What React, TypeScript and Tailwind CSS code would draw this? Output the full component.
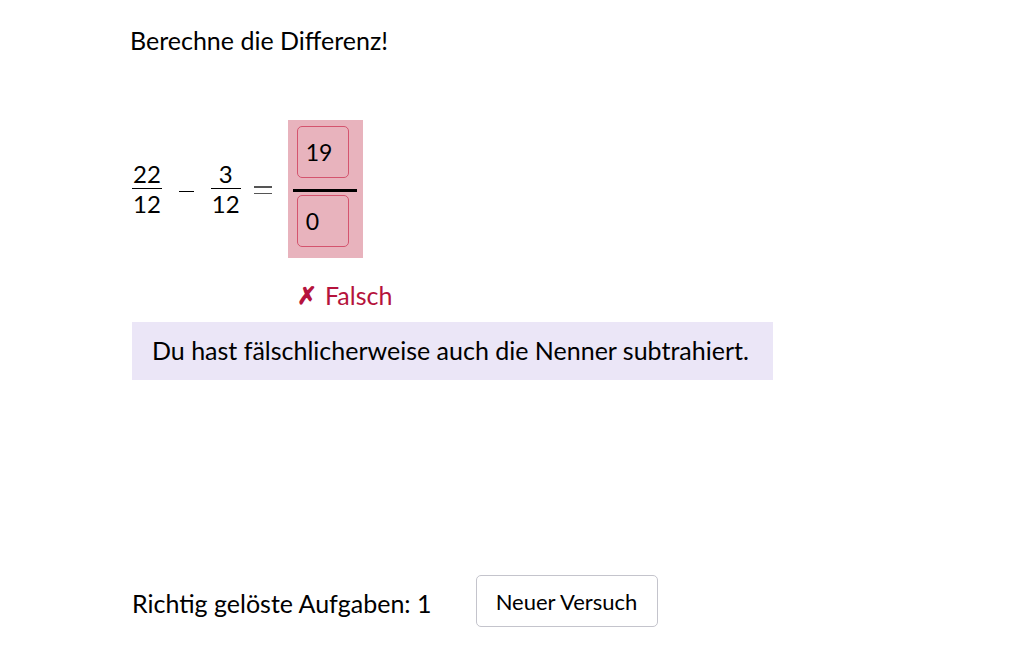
import React from "react"

const Fraction = ({ top, bottom }: { top: string, bottom: string }) => (
    <div className="flex flex-col items-center text-[24px]">
        <span className="leading-[26px] px-[1px]">{top}</span>
        <span className="h-[1px] w-full bg-black mt-[1px] mb-[2px]" />
        <span className="leading-[26px] px-[1px]">{bottom}</span>
    </div>
)

const AnswerInput = ({ value }: { value: string }) => (
    <div className="w-[52px] h-[52px] rounded-[5px] border border-[#d4546e] flex items-center pl-[8px] text-[23px]">
        {value}
    </div>
)

export default function App() {
    const [solved] = React.useState(1)

    return (
        <div className="w-[1032px] h-[645px] bg-white text-black font-['Lato',sans-serif] text-[25px]">
            <div className="pl-[130px] pt-[24px]">
                <p className="leading-[32px]">Berechne die Differenz!</p>

                {/* subtraction task */}
                <div className="mt-[64px] flex items-center h-[138px]">
                    <div className="ml-[2px]"><Fraction top="22" bottom="12" /></div>
                    <span className="ml-[17px] mr-[17px] w-[15px] h-[1px] bg-black mt-[4px]" />
                    <Fraction top="3" bottom="12" />
                    <span className="ml-[13px] flex flex-col gap-[5px] mt-[2px]">
                        <span className="w-[18px] h-[1.5px] bg-[#555]" />
                        <span className="w-[18px] h-[1.5px] bg-[#555]" />
                    </span>
                    <div className="ml-[16px] h-[138px] w-[75px] bg-[#e8b3bd] flex flex-col items-center pt-[6px]">
                        <div className="self-start ml-[9px]"><AnswerInput value="19" /></div>
                        <span className="w-[64px] h-[3px] bg-black mt-[11px] mb-[3px]" />
                        <div className="self-start ml-[9px]"><AnswerInput value="0" /></div>
                    </div>
                </div>

                <p className="mt-[22px] ml-[167px] text-[#b5133c] leading-[30px] flex items-center gap-[8px]">
                    <span className="font-bold text-[24px]">✗</span>
                    <span>Falsch</span>
                </p>

                <div className="mt-[12px] ml-[2px] w-[641px] h-[58px] bg-[#ebe6f7] flex items-center pl-[20px]">
                    Du hast fälschlicherweise auch die Nenner subtrahiert.
                </div>

                <div className="mt-[195px] ml-[2px] flex items-center">
                    <span className="mt-[6px]">Richtig gelöste Aufgaben: {solved}</span>
                    <button className="ml-[44px] w-[182px] h-[52px] rounded-[5px] border border-[#c4c4cc] bg-white text-[22px]">
                        Neuer Versuch
                    </button>
                </div>
            </div>
        </div>
    )
}
